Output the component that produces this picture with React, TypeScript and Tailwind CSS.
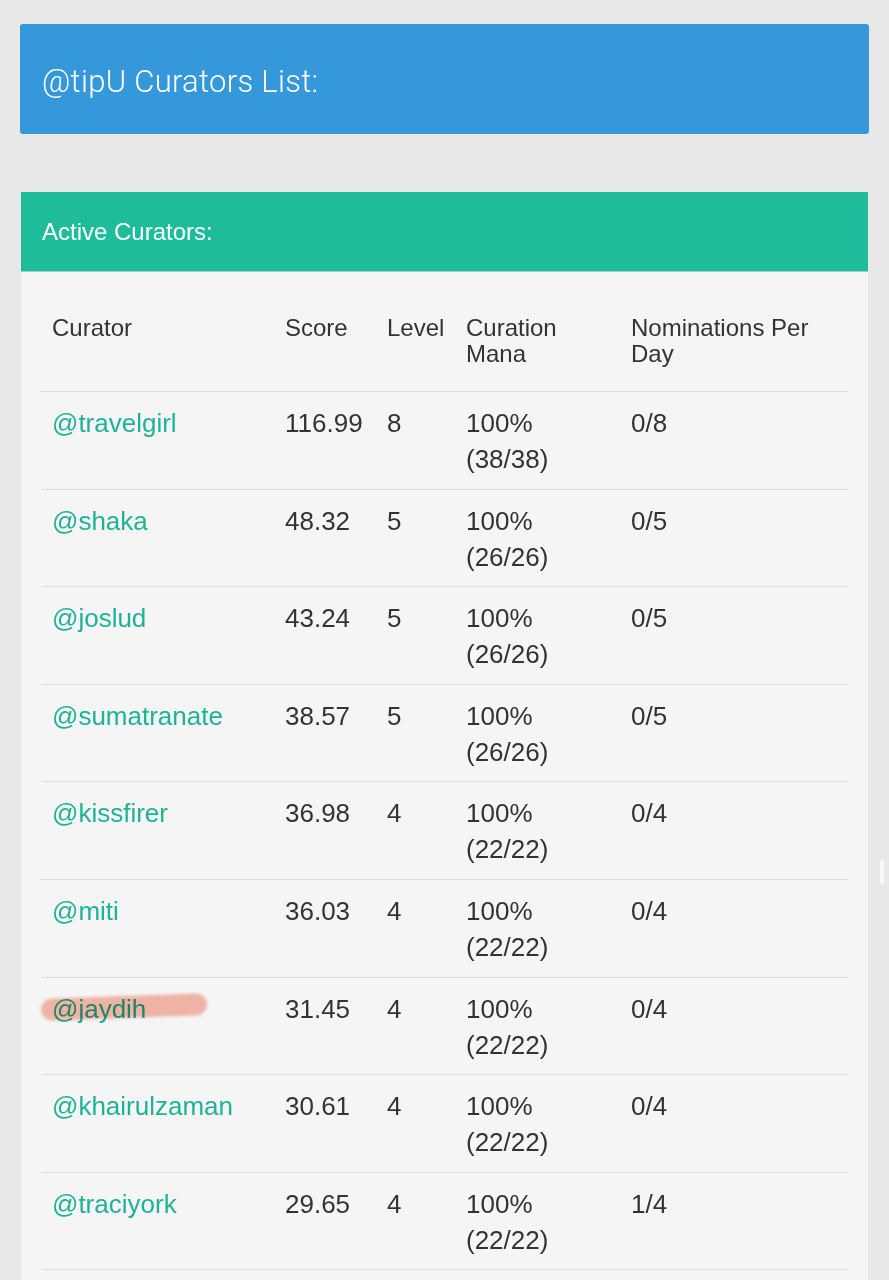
const curators = [
  { name: "@travelgirl", score: "116.99", level: "8", mana: "100%", of: "(38/38)", noms: "0/8" },
  { name: "@shaka", score: "48.32", level: "5", mana: "100%", of: "(26/26)", noms: "0/5" },
  { name: "@joslud", score: "43.24", level: "5", mana: "100%", of: "(26/26)", noms: "0/5" },
  { name: "@sumatranate", score: "38.57", level: "5", mana: "100%", of: "(26/26)", noms: "0/5" },
  { name: "@kissfirer", score: "36.98", level: "4", mana: "100%", of: "(22/22)", noms: "0/4" },
  { name: "@miti", score: "36.03", level: "4", mana: "100%", of: "(22/22)", noms: "0/4" },
  { name: "@jaydih", score: "31.45", level: "4", mana: "100%", of: "(22/22)", noms: "0/4", marked: true },
  { name: "@khairulzaman", score: "30.61", level: "4", mana: "100%", of: "(22/22)", noms: "0/4" },
  { name: "@traciyork", score: "29.65", level: "4", mana: "100%", of: "(22/22)", noms: "1/4" },
];

const App = () => {
  return (
    <div className="min-h-screen w-full bg-[#e8e8e8] px-5 pt-6 font-[family-name:Liberation_Sans,Arial,sans-serif] text-[#333]">
      <div className="h-[110px] rounded-[3px] bg-[#3598db] flex items-center px-[22px] pt-[6px]">
        <h1 className="text-[31px] font-light text-white font-[family-name:Roboto,sans-serif] tracking-[0.3px]">
          @tipU Curators List:
        </h1>
      </div>

      <div className="mt-[58px] mx-px">
        <div className="h-[80px] bg-[#1fbc9c] border-b border-[#8fd8c8] flex items-center px-[21px]">
          <h2 className="text-[24px] text-white">Active Curators:</h2>
        </div>
        <div className="bg-[#f5f5f5] px-5 pt-[31px] pb-10">
          <table className="w-full table-fixed border-collapse">
            <colgroup>
              <col className="w-[232px]" />
              <col className="w-[102px]" />
              <col className="w-[79px]" />
              <col className="w-[165px]" />
              <col />
            </colgroup>
            <thead>
              <tr className="border-b border-[#dcdcdc] text-left align-top text-[24px] leading-[26px]">
                <th className="font-normal pl-[11px] pt-3 pb-6">Curator</th>
                <th className="font-normal pl-[12px] pt-3 pb-6">Score</th>
                <th className="font-normal pl-[12px] pt-3 pb-6">Level</th>
                <th className="font-normal pl-[12px] pt-3 pb-6">
                  Curation
                  <br />
                  Mana
                </th>
                <th className="font-normal pl-[12px] pt-3 pb-6">
                  Nominations Per
                  <br />
                  Day
                </th>
              </tr>
            </thead>
            <tbody>
              {curators.map((c) => (
                <tr
                  key={c.name}
                  className="border-b border-[#dcdcdc] align-top text-[26px] leading-[36px]"
                >
                  <td className="relative pl-[11px] pt-[13px] pb-[11.6px]">
                    <span className="text-[#1fb396]">{c.name}</span>
                    {c.marked && (
                      <span className="absolute left-0 top-[18px] h-[22px] w-[166px] -rotate-2 rounded-full bg-[#f7a492] opacity-75 mix-blend-multiply blur-[1.5px]" />
                    )}
                  </td>
                  <td className="pl-[12px] pt-[13px] pb-[11.6px]">{c.score}</td>
                  <td className="pl-[12px] pt-[13px] pb-[11.6px]">{c.level}</td>
                  <td className="pl-[12px] pt-[13px] pb-[11.6px]">
                    {c.mana}
                    <br />
                    {c.of}
                  </td>
                  <td className="pl-[12px] pt-[13px] pb-[11.6px]">{c.noms}</td>
                </tr>
              ))}
            </tbody>
          </table>
        </div>
      </div>

      <div className="fixed right-[5px] top-[860px] h-[24px] w-[4px] rounded-full bg-white/70" />
    </div>
  );
};

export default App;
